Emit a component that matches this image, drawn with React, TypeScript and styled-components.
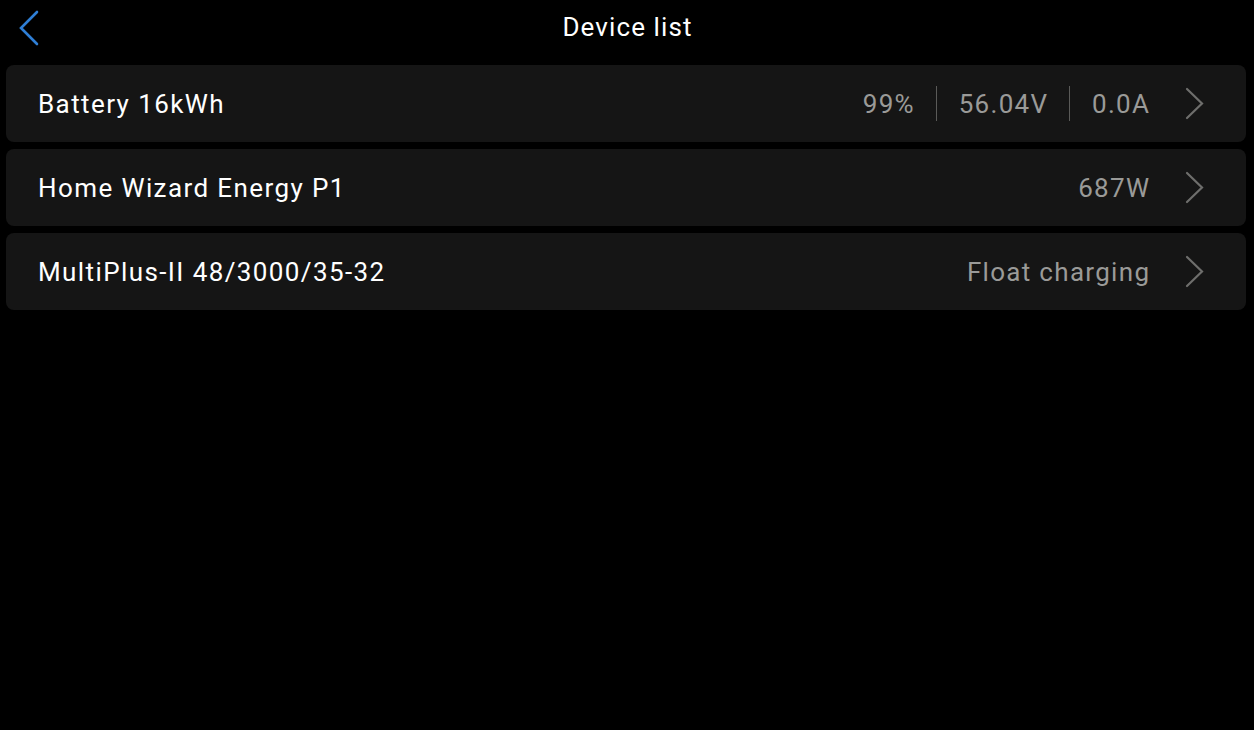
import React from "react";
import styled, { createGlobalStyle } from "styled-components";

const GlobalStyle = createGlobalStyle`
  html, body {
    margin: 0;
    padding: 0;
    background: #000;
  }
  body {
    font-family: Roboto, "Liberation Sans", sans-serif;
    color: #fff;
  }
`;

const Page = styled.div`
  width: 1254px;
  height: 730px;
  background: #000;
  display: flex;
  flex-direction: column;
`;

const Header = styled.header`
  position: relative;
  height: 58px;
  display: flex;
  align-items: center;
  justify-content: center;
`;

const BackButton = styled.button`
  position: absolute;
  left: 12px;
  top: 6px;
  width: 34px;
  height: 44px;
  border: none;
  background: none;
  padding: 0;
  display: flex;
  align-items: center;
  justify-content: center;
  cursor: pointer;
`;

const Title = styled.h1`
  margin: 0 0 0 1px;
  margin-top: -4px;
  font-size: 26px;
  font-weight: 400;
  letter-spacing: 1.1px;
  color: #fff;
`;

const List = styled.div`
  display: flex;
  flex-direction: column;
  gap: 7px;
  padding: 7px 8px 0 6px;
`;

const Row = styled.div`
  height: 77px;
  background: #151515;
  border-radius: 8px;
  display: flex;
  align-items: center;
  padding: 0 42px 0 32px;
`;

const Name = styled.span`
  flex: 1;
  font-size: 26px;
  letter-spacing: 1.4px;
  color: #fff;
`;

const Values = styled.div`
  display: flex;
  align-items: center;
`;

const Value = styled.span`
  font-size: 26px;
  letter-spacing: 1.3px;
  margin-right: -1.3px;
  color: #9a9a98;
`;

const Divider = styled.span`
  width: 1px;
  height: 35px;
  background: #5a5a58;
  margin: 0 22px;
`;

const Arrow = styled.span`
  display: flex;
  margin-left: 36px;
`;

const Chevron = ({ color, w, h }: { color: string; w: number; h: number }) => (
  <svg width={w} height={h} viewBox={`0 0 ${w} ${h}`} fill="none">
    <polyline
      points={`2,2 ${w - 2},${h / 2} 2,${h - 2}`}
      stroke={color}
      strokeWidth={2.2}
      strokeLinecap="round"
      strokeLinejoin="miter"
    />
  </svg>
);

const BackChevron = () => (
  <svg width={20} height={36} viewBox="0 0 20 36" fill="none">
    <polyline
      points="18,2 2,18 18,34"
      stroke="#2f7fd6"
      strokeWidth={2.6}
      strokeLinecap="round"
    />
  </svg>
);

type Device = { name: string; values: string[] };

const devices: Device[] = [
  { name: "Battery 16kWh", values: ["99%", "56.04V", "0.0A"] },
  { name: "Home Wizard Energy P1", values: ["687W"] },
  { name: "MultiPlus-II 48/3000/35-32", values: ["Float charging"] },
];

const App = () => {
  return (
    <Page>
      <GlobalStyle />
      <Header>
        <BackButton aria-label="Back">
          <BackChevron />
        </BackButton>
        <Title>Device list</Title>
      </Header>
      <List>
        {devices.map((d) => (
          <Row key={d.name}>
            <Name>{d.name}</Name>
            <Values>
              {d.values.map((v, i) => (
                <React.Fragment key={v}>
                  {i > 0 && <Divider />}
                  <Value>{v}</Value>
                </React.Fragment>
              ))}
            </Values>
            <Arrow>
              <Chevron color="#6e6e6c" w={19} h={33} />
            </Arrow>
          </Row>
        ))}
      </List>
    </Page>
  );
};

export default App;
